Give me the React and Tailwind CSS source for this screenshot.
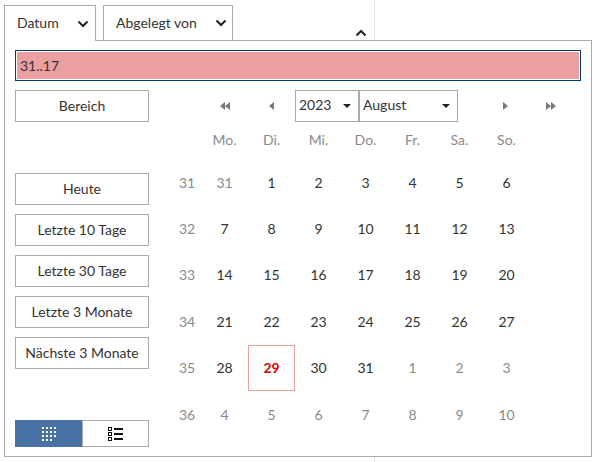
const F = { fontFamily: 'Lato, sans-serif' };

const Chevron = ({ up, className = "" }) => (
  <svg width="12" height="8" viewBox="0 0 12 8" className={className}>
    <path d={up ? "M1.5 6.5 6 2l4.5 4.5" : "M1.5 1.5 6 6l4.5-4.5"} fill="none" stroke="#222" strokeWidth="2" />
  </svg>
);

const Caret = () => (
  <svg width="8" height="4" viewBox="0 0 8 4"><path d="M0 0h8L4 4z" fill="#222" /></svg>
);

const Tri = ({ dir, n = 1 }) => (
  <svg width={n === 2 ? 10 : 5} height="8" viewBox={n === 2 ? "0 0 10 8" : "0 0 5 8"}>
    {dir === "l" ? (
      <>
        <path d="M5 0v8L0 4z" fill="#777" />
        {n === 2 && <path d="M10 0v8L5 4z" fill="#777" />}
      </>
    ) : (
      <>
        <path d="M0 0v8l5-4z" fill="#777" />
        {n === 2 && <path d="M5 0v8l5-4z" fill="#777" />}
      </>
    )}
  </svg>
);

const GridIcon = () => (
  <svg width="14" height="14" viewBox="0 0 14 14" fill="#fff">
    {[0, 4, 8, 12].flatMap((y) =>
      [0, 4, 8, 12].map((x) =>
        y === 12 && x === 12 ? null : <rect key={`${x}-${y}`} x={x} y={y} width="2" height="2" />
      )
    )}
  </svg>
);

const ListIcon = () => (
  <svg width="15" height="14" viewBox="0 0 15 14">
    {[0, 5, 10].map((y) => (
      <g key={y}>
        <rect x="0.5" y={y + 0.5} width="3" height="3" fill="none" stroke="#111" />
        <rect x="6" y={y + 1} width="9" height="2" fill="#111" />
      </g>
    ))}
  </svg>
);

const Btn = ({ children }) => (
  <button className="w-[134px] h-8 pb-[2px] border border-[#aaaaaa] bg-white text-[14px] text-[#333] flex items-center justify-center">
    {children}
  </button>
);

const weeks = [
  [31, [[31, 1], [1], [2], [3], [4], [5], [6]]],
  [32, [[7], [8], [9], [10], [11], [12], [13]]],
  [33, [[14], [15], [16], [17], [18], [19], [20]]],
  [34, [[21], [22], [23], [24], [25], [26], [27]]],
  [35, [[28], [29, 2], [30], [31], [1, 1], [2, 1], [3, 1]]],
  [36, [[4, 1], [5, 1], [6, 1], [7, 1], [8, 1], [9, 1], [10, 1]]],
];

export default function App() {
  return (
    <div className="w-[596px] h-[462px] bg-white overflow-hidden text-[14px] text-[#333]" style={F}>
      <div className="w-[375px] h-10 border-r border-[#e4e4e4] pl-1 pt-[5px] flex items-start">
        <div className="w-[92px] h-[36px] border border-b-0 border-[#aaaaaa] bg-white flex items-center justify-between pl-3 pr-[6px] relative z-10">
          <span className="relative -top-[1px]">Datum</span>
          <Chevron />
        </div>
        <div className="ml-[7px] w-[130px] h-[35px] border border-b-0 border-[#aaaaaa] flex items-center justify-between pl-3 pr-[5px]">
          <span className="relative -top-[1px]">Abgelegt von</span>
          <Chevron />
        </div>
        <Chevron up className="ml-[122px] mt-[24px]" />
      </div>

      <div className="ml-1 w-[588px] h-[417px] border border-[#aaaaaa] pl-[10px] pr-[9px] pt-[9px]">
        <div className="h-[31px] w-[566px] border border-[#003f6c] p-[1px] bg-white">
          <div className="h-full bg-[#ec9fa1] pl-[3px] flex items-center">31..17</div>
        </div>

        <div className="flex mt-[9px]">
          <div className="w-[134px] h-[357px] flex flex-col">
            <Btn>Bereich</Btn>
            <div className="mt-[51px] flex flex-col gap-[9px]">
              <Btn>Heute</Btn>
              <Btn>Letzte 10 Tage</Btn>
              <Btn>Letzte 30 Tage</Btn>
              <Btn>Letzte 3 Monate</Btn>
              <Btn>Nächste 3 Monate</Btn>
            </div>
            <div className="mt-auto flex w-[134px] h-[27px]">
              <div className="w-[67px] bg-[#4872a4] flex items-center justify-center"><GridIcon /></div>
              <div className="w-[67px] border border-[#aaaaaa] flex items-center justify-center"><ListIcon /></div>
            </div>
          </div>

          <div className="ml-6 flex-1">
            <div className="h-8 flex items-center">
              <div className="w-[28px]" />
              <div className="w-[47px] flex justify-center"><Tri dir="l" n={2} /></div>
              <div className="w-[47px] flex justify-center"><Tri dir="l" /></div>
              <div className="w-[64px] h-[32px] pb-[3px] border border-[#aaaaaa] flex items-center justify-between pl-[3px] pr-[7px]">
                <span>2023</span><span className="pt-[3px] flex"><Caret /></span>
              </div>
              <div className="w-[99px] h-[32px] pb-[3px] border border-[#aaaaaa] flex items-center justify-between pl-[3px] pr-[7px]">
                <span>August</span><span className="pt-[3px] flex"><Caret /></span>
              </div>
              <div className="w-[94px] flex justify-center"><Tri dir="r" /></div>
              <div className="-ml-[6px]"><Tri dir="r" n={2} /></div>
            </div>

            <div className="grid grid-cols-[28px_repeat(7,47px)] text-center">
              <div className="h-[37px]" />
              {["Mo.", "Di.", "Mi.", "Do.", "Fr.", "Sa.", "So."].map((d) => (
                <div key={d} className="h-[37px] pb-[2px] flex items-center justify-center text-[#8a8a8a]">{d}</div>
              ))}
              {weeks.map(([w, days]) => (
                <div key={w} className="contents">
                  <div className="h-[46.4px] flex items-center justify-center text-[#8a8a8a]">{w}</div>
                  {days.map(([d, k], i) => (
                    <div
                      key={i}
                      className={`h-[46.4px] flex items-center justify-center ${
                        k === 2
                          ? "border border-[#ec9fa1] text-[#dd0000] font-bold"
                          : k === 1
                          ? "text-[#8a8a8a]"
                          : "text-[#333]"
                      }`}
                    >
                      {d}
                    </div>
                  ))}
                </div>
              ))}
            </div>
          </div>
        </div>
      </div>
      <div className="w-[375px] h-[5px] border-r border-[#e4e4e4]" />
    </div>
  );
}
